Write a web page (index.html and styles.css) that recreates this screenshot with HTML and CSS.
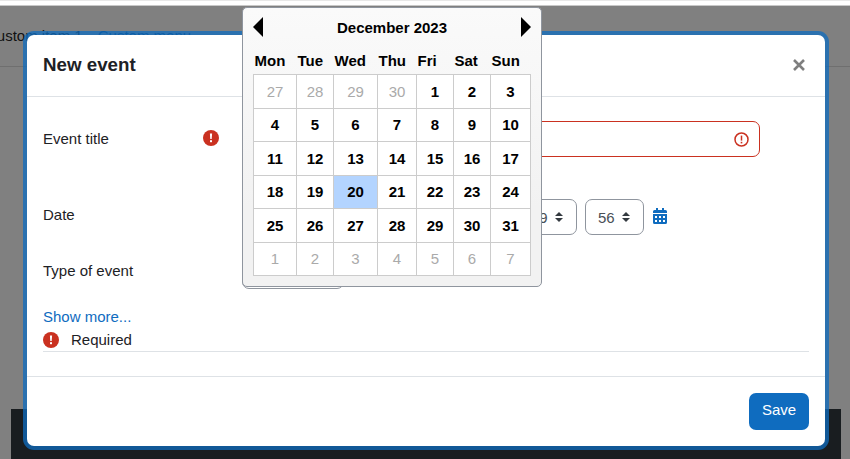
FILE: index.html
```html
<!DOCTYPE html>
<html lang="en">

<head>
  <meta charset="UTF-8">
  <title>New event</title>
  <link rel="stylesheet" href="styles.css">
</head>

<body>
  <div class="topstrip"></div>
  <nav class="nav">
    <span>Custom item 1</span>
    <span class="nav_menu">Custom menu</span>
  </nav>
  <div class="spacer"></div>
  <footer class="footer"></footer>

  <div class="modal">
    <div class="modal_header">
      <h2>New event</h2>
      <svg class="close" width="12" height="12" viewBox="0 0 12 12">
        <path d="M1 1 11 11M11 1 1 11" stroke="#7f7f7f" stroke-width="2.6" fill="none" />
      </svg>
    </div>

    <div class="modal_body">
      <div class="row row_title">
        <label>Event title</label>
        <svg class="req" width="16" height="16" viewBox="0 0 16 16">
          <circle cx="8" cy="8" r="8" fill="#ca3120" />
          <path d="M6.900 3.600h2.200L8.700 9H7.300Z" fill="#fff" />
          <rect x="7" y="10.200" width="2" height="2" fill="#fff" />
        </svg>
        <div class="input">
          <svg width="15" height="15" viewBox="0 0 15 15">
            <circle cx="7.500" cy="7.500" r="6.500" fill="none" stroke="#ca3120" stroke-width="1.500" />
            <path d="M7.500 3.600v5" stroke="#ca3120" stroke-width="1.500" />
            <rect x="6.700" y="9.800" width="1.600" height="1.600" fill="#ca3120" />
          </svg>
        </div>
      </div>

      <div class="row row_date">
        <label>Date</label>
        <div class="selects">
          <div class="select"></div>
          <div class="select s_month"></div>
          <div class="select s_year"></div>
          <div class="select">09<svg class="caret" width="8" height="10" viewBox="0 0 8 10"><path d="M0 4 4 0 8 4ZM0 6 8 6 4 10Z" fill="#343a40" /></svg></div>
          <div class="select">56<svg class="caret" width="8" height="10" viewBox="0 0 8 10"><path d="M0 4 4 0 8 4ZM0 6 8 6 4 10Z" fill="#343a40" /></svg></div>
          <svg class="cal_icon" width="14" height="16" viewBox="0 0 14 16">
            <path fill="#0f6cbf" d="M3 0h2v2h4V0h2v2h1.500A1.500 1.500 0 0 1 14 3.500V5H0V3.500A1.500 1.500 0 0 1 1.500 2H3ZM0 6h14v8.500a1.500 1.500 0 0 1-1.500 1.500h-11A1.500 1.500 0 0 1 0 14.500Z" />
            <path fill="#fff" d="M2 8h2v2H2ZM6 8h2v2H6ZM10 8h2v2h-2ZM2 12h2v2H2ZM6 12h2v2H6ZM10 12h2v2h-2Z" />
          </svg>
        </div>
      </div>

      <div class="row row_type">
        <label>Type of event</label>
        <div class="select s_type"></div>
      </div>

      <a class="more" href="#">Show more...</a>
      <div class="required">
        <svg width="16" height="16" viewBox="0 0 16 16">
          <circle cx="8" cy="8" r="8" fill="#ca3120" />
          <path d="M6.900 3.600h2.200L8.700 9H7.300Z" fill="#fff" />
          <rect x="7" y="10.200" width="2" height="2" fill="#fff" />
        </svg>
        <span>Required</span>
      </div>
    </div>

    <div class="modal_footer">
      <button class="save">Save</button>
    </div>

    <div class="calendar">
      <div class="cal_head">
        <svg width="10" height="20" viewBox="0 0 10 20"><path d="M10 0V20L0 10Z" /></svg>
        <span>December 2023</span>
        <svg width="10" height="20" viewBox="0 0 10 20"><path d="M0 0V20L10 10Z" /></svg>
      </div>
      <table>
        <colgroup>
          <col class="c43"><col class="c37"><col class="c44"><col class="c39"><col class="c37"><col class="c37"><col class="c40">
        </colgroup>
        <thead>
          <tr><th>Mon</th><th>Tue</th><th>Wed</th><th>Thu</th><th>Fri</th><th>Sat</th><th>Sun</th></tr>
        </thead>
        <tbody>
          <tr><td class="off">27</td><td class="off">28</td><td class="off">29</td><td class="off">30</td><td>1</td><td>2</td><td>3</td></tr>
          <tr><td>4</td><td>5</td><td>6</td><td>7</td><td>8</td><td>9</td><td>10</td></tr>
          <tr><td>11</td><td>12</td><td>13</td><td>14</td><td>15</td><td>16</td><td>17</td></tr>
          <tr><td>18</td><td>19</td><td class="sel">20</td><td>21</td><td>22</td><td>23</td><td>24</td></tr>
          <tr><td>25</td><td>26</td><td>27</td><td>28</td><td>29</td><td>30</td><td>31</td></tr>
          <tr><td class="off">1</td><td class="off">2</td><td class="off">3</td><td class="off">4</td><td class="off">5</td><td class="off">6</td><td class="off">7</td></tr>
        </tbody>
      </table>
    </div>
  </div>
</body>

</html>
```

FILE: styles.css
```css
html,
body {
  width: 100%;
  height: 100%;
  overflow: hidden;
}

body {
  margin: 0;
  display: flex;
  flex-direction: column;
  background-color: #808080;
  color: #1d2125;
  font-family: 'Liberation Sans', sans-serif;
  font-size: 15px;
}

.topstrip {
  height: 4px;
  flex: none;
  background-color: #fff;
  border-top: 1px solid #e8e8e8;
  border-bottom: 1px solid #c8c8c8;
}

.nav {
  flex: none;
  display: flex;
  gap: 15px;
  height: 61px;
  margin-left: -14px;
  padding-top: 21px;
  box-sizing: border-box;
  border-bottom: 1px solid #6f6f6f;
  color: #111;
}

.nav_menu {
  color: #083660;
}

.spacer {
  flex: 1;
}

.footer {
  flex: none;
  height: 50px;
  margin: 0 9px 0 11px;
  background-color: #191d20;
}

.modal {
  position: absolute;
  left: 27px;
  top: 35px;
  width: 798px;
  height: 411px;
  display: flex;
  flex-direction: column;
  background-color: #fff;
  border-radius: 7px;
  box-shadow: 0 0 0 4px rgba(15, 108, 191, .75);
}

.modal_header {
  flex: none;
  height: 59px;
  padding: 0 20px 2px 16px;
  display: flex;
  align-items: center;
  justify-content: space-between;
  border-bottom: 1px solid #dee2e6;
}

.modal_header h2 {
  margin: 0;
  font-size: 18.75px;
  font-weight: bold;
}

.modal_body {
  flex: 1;
  padding: 24px 16px 0;
  display: flex;
  flex-direction: column;
}

.row {
  display: flex;
  align-items: center;
  height: 36px;
}

.row label {
  width: 200px;
  flex: none;
}

.row_title label {
  width: 160px;
  margin-top: -2px;
}

.row_date label {
  margin-top: -6px;
}

.row_type label {
  width: 199px;
  margin-top: -2px;
}

.req {
  margin-right: 24px;
  margin-top: -2px;
  flex: none;
}

.row_date {
  margin-top: 42px;
}

.row_type {
  margin-top: 18px;
}

.input {
  display: flex;
  align-items: center;
  justify-content: flex-end;
  padding-right: 10px;
  box-sizing: border-box;
  width: 517px;
  height: 36px;
  border: 1px solid #ca3120;
  border-radius: 7px;
}

.selects {
  display: flex;
  align-items: center;
  gap: 8px;
}

.select {
  width: 59px;
  height: 36px;
  box-sizing: border-box;
  padding: 0 13px 0 12px;
  display: flex;
  align-items: center;
  justify-content: space-between;
  border: 1px solid #8f959e;
  border-radius: 7px;
  color: #495057;
}

.s_month {
  width: 126px;
}

.s_year {
  width: 66px;
}

.s_type {
  width: 102px;
}

.cal_icon {
  flex: none;
  margin: -2px 0 0 1px;
}

.more {
  margin-top: 19px;
  color: #0f6cbf;
  text-decoration: none;
}

.required {
  display: flex;
  align-items: center;
  gap: 12px;
  margin-top: 6px;
  padding-bottom: 3px;
  border-bottom: 1px solid #dee2e6;
}

.modal_footer {
  flex: none;
  height: 70px;
  padding: 16px;
  box-sizing: border-box;
  display: flex;
  justify-content: flex-end;
  align-items: flex-start;
  border-top: 1px solid #dee2e6;
}

.save {
  width: 60px;
  height: 37px;
  padding: 0 0 4px;
  border: none;
  border-radius: 7px;
  background-color: #0f6cbf;
  color: #fff;
  font-family: inherit;
  font-size: 15px;
}

.calendar {
  position: absolute;
  left: 215px;
  top: -28px;
  width: 300px;
  height: 280px;
  box-sizing: border-box;
  padding: 0 10px;
  background-color: #f2f2f2;
  background-image: linear-gradient(#fafafa, #f2f2f2 200px);
  border: 1px solid #8f959e;
  border-radius: 5px;
  color: #000;
}

.cal_head {
  height: 38px;
  display: flex;
  align-items: center;
  justify-content: space-between;
  font-weight: bold;
}

.calendar table {
  border-collapse: collapse;
  table-layout: fixed;
  width: 277px;
}

.c43 { width: 43px; }
.c37 { width: 37px; }
.c44 { width: 44px; }
.c39 { width: 39px; }
.c40 { width: 40px; }

.calendar th {
  height: 28px;
  padding: 0 0 0 1px;
  text-align: left;
  font-size: 15px;
}

.calendar td {
  height: 32.5px;
  padding: 0;
  text-align: center;
  font-weight: bold;
  background-color: #fff;
  border: 1px solid #ccc;
}

.calendar td.off {
  font-weight: normal;
  color: #aaa;
}

.calendar td.sel {
  background-color: #b3d4ff;
}
```
